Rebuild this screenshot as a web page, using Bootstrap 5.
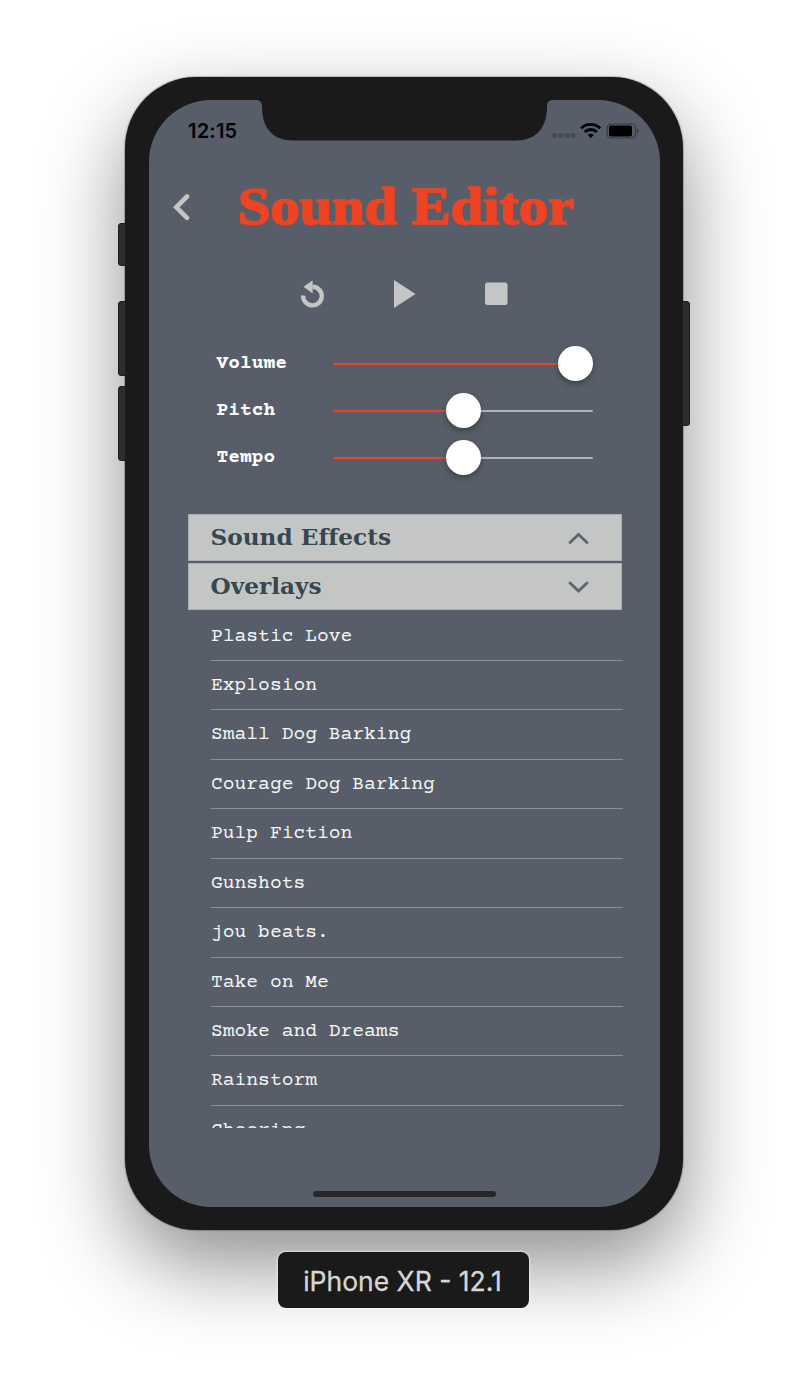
<!DOCTYPE html>
<html lang="en">
<head>
<meta charset="utf-8">
<meta name="viewport" content="width=device-width, initial-scale=1">
<title>Sound Editor</title>
<link href="https://cdn.jsdelivr.net/npm/bootstrap@5.3.0/dist/css/bootstrap.min.css" rel="stylesheet">
<style>
  :root { --slate: #575e69; --silver: #c4c6c5; --flame: #ee4423; }
  body { background: #fff; height: 1380px; overflow: hidden; font-family: "Inter", sans-serif; }
  .stage { padding-top: 77px; }
  .device { width: 558px; height: 1153px; padding: 23px 23px 23px 24px; background: #1a1a1a; border-radius: 71px;
    box-shadow: 0 0 1px 1px rgba(0,0,0,.22), 0 34px 84px rgba(0,0,0,.45); }
  .side-key { position: absolute; width: 8px; background: #2d2d2d; border: 1px solid #1c1c1c; border-radius: 3px 0 0 3px; left: -7px; }
  .side-key.power { left: auto; right: -7px; border-radius: 0 3px 3px 0; top: 224px; height: 125px; }
  .screen { height: 1107px; background: var(--slate); border-radius: 62px; overflow: hidden; }
  .notch { position: absolute; top: 0; left: 107px; }
  .status { height: 60px; padding: 2px 21px 0 39px; font-weight: 600; font-size: 20px; letter-spacing: .2px; color: #000; }
  .status svg { overflow: visible; margin-top: 3px; }
  .title-row { height: 92px; padding: 2px 0 0 24px; }
  .app-title { font: bold 52.5px/90px "Liberation Serif", serif; color: var(--flame); margin: -3px 0 0 48px; -webkit-text-stroke: 1.7px var(--flame);
    transform: scaleX(1.113); transform-origin: left center; }
  .transport { height: 84px; }
  .transport button { width: 91.5px; height: 44px; }
  .sliders { padding: 4px 66px 0 67px; height: 178px; }
  .slider-row { height: 47px; }
  .slider-row label { width: 117px; padding-left: .5px; font: bold 19.6px/24px "Courier Prime", "Liberation Mono", monospace; color: #fff; }
  .slider-row .form-range { width: 260px; height: 36px; margin-top: 1px; }
  .form-range::-webkit-slider-runnable-track { height: 2.5px; background: linear-gradient(90deg, var(--flame) var(--fill), #b4b3b6 var(--fill)); }
  .form-range::-webkit-slider-thumb { width: 35px; height: 35px; margin-top: -17px; background: #fff; border-radius: 50%; box-shadow: 0 3px 6px rgba(0,0,0,.3); }
  .panels { width: 434px; height: 97px; margin-left: 38.5px; }
  .panel-head { height: 46.5px; padding: 0 32px 0 22px; background: var(--silver); border: 1px solid #aaaeb2; color: #344752;
    font: bold 23.2px/46px "DejaVu Serif", serif; font-variant-ligatures: none; }
  .panel-head svg { margin-top: 1px; }
  .panel-head + .panel-head { margin-top: 2.5px; }
  .tracks { height: 516px; margin: .5px 37px 0 62px; overflow: hidden; }
  .track { height: 49.44px; font: 19.65px/51px "Courier Prime", "Liberation Mono", monospace; color: #f6f6f6; border-bottom: 1px solid #8b9097; white-space: pre; }
  .home-bar { width: 183px; height: 6px; margin-top: 63.5px; background: #272727; border-radius: 3px; }
  .caption-chip { width: 251px; height: 56px; margin: 22px 1px 0 0; padding: 4px 2px 0 0; background: #1a1a1a; color: #d6d6d6; border-radius: 8px; font-size: 26.5px; -webkit-text-stroke: .3px #d6d6d6; box-shadow: 0 0 0 1.5px rgba(255,255,255,.35); z-index: 1; }
</style>
</head>
<body>
<main class="stage d-flex flex-column align-items-center">
  <div class="device position-relative">
    <span class="side-key" style="top:146px;height:43px"></span>
    <span class="side-key" style="top:224px;height:75px"></span>
    <span class="side-key" style="top:309px;height:75px"></span>
    <span class="side-key power"></span>
    <div class="screen position-relative">
      <svg class="notch" width="297" height="41" viewBox="0 0 297 41"><path fill="#1a1a1a" d="M0 0C4 0 6 2 6 7C6 29 18 40.5 37 40.5H260C279 40.5 291 29 291 7C291 2 293 0 297 0Z"/></svg>
      <div class="status d-flex align-items-center justify-content-between">
        <span>12:15</span>
        <svg width="87" height="18" viewBox="0 0 87 18">
          <g fill="#000" fill-opacity=".2"><rect y="9" width="5" height="5" rx="1.8"/><rect x="6.2" y="9" width="5" height="5" rx="1.8"/><rect x="12.4" y="9" width="5" height="5" rx="1.8"/><rect x="18.6" y="9" width="5" height="5" rx="1.8"/></g>
          <g fill="none" stroke="#000" stroke-width="2.9"><path d="M29.2 4.3a13.4 13.4 0 0 1 18.9 0"/><path d="M32.8 8a8.5 8.5 0 0 1 12 0"/></g>
          <path d="M35.8 11a4.5 4.5 0 0 1 6 0L38.8 14.1Z"/>
          <rect x="55.1" y="0" width="28.4" height="14" rx="3.8" fill="none" stroke="#000" stroke-opacity=".4" stroke-width="1.2"/>
          <rect x="57" y="1.6" width="23" height="10.8" rx="2"/>
          <path fill-opacity=".4" d="M85 4.5q1.8.8 1.8 2.5T85 9.5z"/>
        </svg>
      </div>
      <header class="title-row d-flex align-items-center">
        <svg width="17" height="28" viewBox="0 0 17 28"><path d="M14 3.5L3.3 14.2L14 24.8" fill="none" stroke="#c4c6c5" stroke-width="4.6" stroke-linecap="round"/></svg>
        <h1 class="app-title text-nowrap">Sound Editor</h1>
      </header>
      <div class="transport d-flex align-items-center justify-content-center">
        <button class="btn p-0 border-0" aria-label="Restart"><svg width="26" height="30" viewBox="0 0 26 30"><path d="M3.2 16.5A9.3 9.3 0 1 0 12.5 7.8" fill="none" stroke="#c4c6c5" stroke-width="4.4"/><path d="M3.6 7.8L12.6 1.2V14.4Z" fill="#c4c6c5"/></svg></button>
        <button class="btn p-0 border-0" aria-label="Play"><svg width="22" height="28" viewBox="0 0 22 28"><path d="M0 0L21.5 14L0 28Z" fill="#c4c6c5"/></svg></button>
        <button class="btn p-0 border-0" aria-label="Stop"><svg width="23" height="26"><rect y="1.5" width="22.5" height="22.5" rx="2.5" fill="#c4c6c5"/></svg></button>
      </div>
      <section class="sliders">
        <div class="slider-row d-flex align-items-center"><label for="v">Volume</label><input id="v" type="range" class="form-range" value="100" style="--fill:94%"></div>
        <div class="slider-row d-flex align-items-center"><label for="p">Pitch</label><input id="p" type="range" class="form-range" value="50" style="--fill:50%"></div>
        <div class="slider-row d-flex align-items-center"><label for="t">Tempo</label><input id="t" type="range" class="form-range" value="50" style="--fill:50%"></div>
      </section>
      <section class="panels d-flex flex-column">
        <div class="panel-head d-flex justify-content-between align-items-center"><span>Sound Effects</span><svg width="21" height="14" viewBox="0 0 21 14"><path d="M2 11.5L10.5 3.5L19 11.5" fill="none" stroke="#5c6570" stroke-width="2.8" stroke-linecap="round"/></svg></div>
        <div class="panel-head d-flex justify-content-between align-items-center"><span>Overlays</span><svg width="21" height="14" viewBox="0 0 21 14"><path d="M2 3L10.5 11L19 3" fill="none" stroke="#5c6570" stroke-width="2.8" stroke-linecap="round"/></svg></div>
      </section>
      <div class="tracks">
        <div class="track">Plastic Love</div>
        <div class="track">Explosion</div>
        <div class="track">Small Dog Barking</div>
        <div class="track">Courage Dog Barking</div>
        <div class="track">Pulp Fiction</div>
        <div class="track">Gunshots</div>
        <div class="track">jou beats.</div>
        <div class="track">Take on Me</div>
        <div class="track">Smoke and Dreams</div>
        <div class="track">Rainstorm</div>
        <div class="track">Cheering</div>
      </div>
      <div class="home-bar mx-auto"></div>
    </div>
  </div>
  <div class="caption-chip d-flex align-items-center justify-content-center">iPhone XR - 12.1</div>
</main>
<script src="https://cdn.jsdelivr.net/npm/bootstrap@5.3.0/dist/js/bootstrap.bundle.min.js"></script>
</body>
</html>
